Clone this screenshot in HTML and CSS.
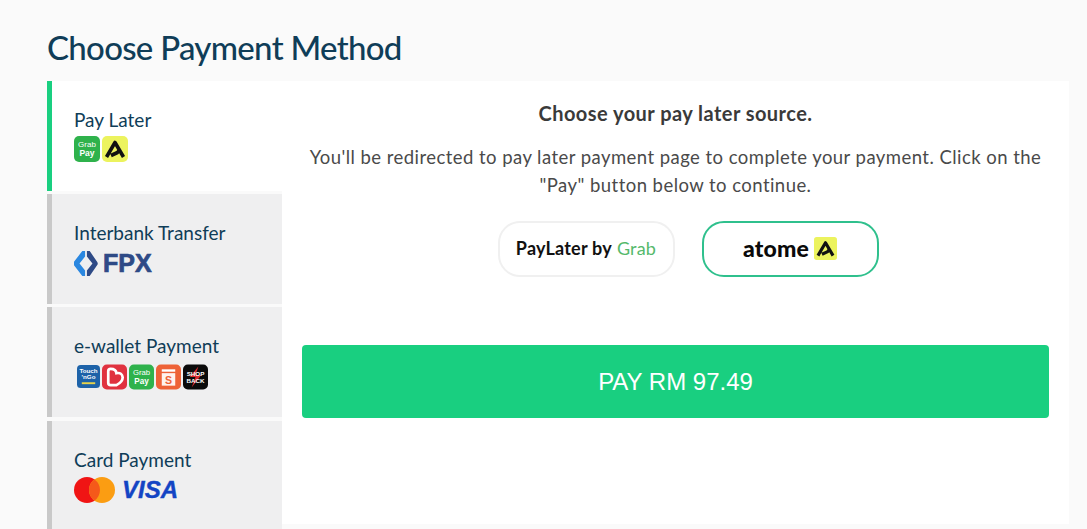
FILE: index.html
```html
<!DOCTYPE html>
<html lang="en">
  <head>
    <meta charset="UTF-8" />
    <meta name="viewport" content="width=device-width, initial-scale=1.0" />
    <title>Choose Payment Method</title>
    <link rel="stylesheet" href="styles.css">
  </head>
  <body>
    <h1 class="page-title">Choose Payment Method</h1>
    <section class="payment">
      <nav class="methods">
        <a class="method method--active">
          <span class="method__label">Pay Later</span>
          <span class="method__icons method__icons--small">
            <svg class="badge" viewBox="0 0 26 26"><rect width="26" height="26" rx="5" fill="#2fb24c"/><text x="13" y="11" text-anchor="middle" class="badge__text badge__text--thin" font-size="8">Grab</text><text x="13" y="20" text-anchor="middle" class="badge__text" font-size="8.5">Pay</text></svg>
            <svg class="badge" viewBox="0 0 26 26"><rect width="26" height="26" rx="5" fill="#ecf35e"/><path class="atome-mark" d="M4.5 21 L13 6.5 L21.5 21 M9 19.5 L15.5 16.5 L18 13"/></svg>
          </span>
        </a>
        <a class="method">
          <span class="method__label">Interbank Transfer</span>
          <span class="method__icons method__icons--fpx">
            <svg class="fpx-mark" viewBox="0 0 26 27"><path d="M12 0 L12 6 L6 13.5 L12 21 L12 27 L9 27 L0 15.5 Q-1 13.5 0 11.5 L9 0 Z" fill="#2a87e0"/><path d="M14 0 L17 0 L25 11.5 Q26.5 13.5 25 15.5 L17 27 L14 27 L14 21 L20 13.5 L14 6 Z" fill="#2e4a86"/></svg>
            <span class="fpx-text">FPX</span>
          </span>
        </a>
        <a class="method">
          <span class="method__label">e-wallet Payment</span>
          <span class="method__icons method__icons--wallets">
            <svg class="badge badge--tng" viewBox="0 0 24 24"><rect width="24" height="24" rx="4" fill="#1d62a8"/><text x="12" y="8.5" text-anchor="middle" class="badge__text" font-size="6.5">Touch</text><text x="12" y="14.5" text-anchor="middle" class="badge__text" font-size="6.5">'nGo</text><rect x="5" y="18" width="14" height="2" fill="#e8d34a"/></svg>
            <svg class="badge badge--wallet" viewBox="0 0 26 26"><rect width="26" height="26" rx="5" fill="#e0323f"/><path d="M6.5 7 Q6.5 4.5 9 4.5 Q14.5 4.5 15 9 Q21 8 21.5 13.5 Q21.5 18 15 21.5 L9 21.5 Q6.5 21.5 6.5 19 Z" fill="#e0323f" stroke="#fff" stroke-width="2.8"/></svg>
            <svg class="badge badge--wallet" viewBox="0 0 26 26"><rect width="26" height="26" rx="5" fill="#2fb24c"/><text x="13" y="11" text-anchor="middle" class="badge__text badge__text--thin" font-size="8">Grab</text><text x="13" y="20" text-anchor="middle" class="badge__text" font-size="8.5">Pay</text></svg>
            <svg class="badge badge--wallet" viewBox="0 0 26 26"><rect width="26" height="26" rx="5" fill="#ee6237"/><path d="M6 5 L20 5 L20 7.5 L6 7.5 Z" fill="#fff"/><rect x="6" y="9" width="14" height="13" fill="#fff" opacity=".92"/><text x="13" y="20" text-anchor="middle" class="badge__text badge__text--shopee" font-size="11">S</text></svg>
            <svg class="badge badge--wallet" viewBox="0 0 26 26"><rect width="26" height="26" rx="5" fill="#0b0b0b"/><path d="M16 2 L7 13 L13 13 L9 24 L19 11 L13 11 Z" fill="#d92b2b"/><text x="13" y="12" text-anchor="middle" class="badge__text" font-size="6.5">SHOP</text><text x="13" y="19" text-anchor="middle" class="badge__text" font-size="6.5">BACK</text></svg>
          </span>
        </a>
        <a class="method">
          <span class="method__label">Card Payment</span>
          <span class="method__icons method__icons--cards">
            <svg class="mastercard" viewBox="0 0 41 26"><circle cx="13" cy="13" r="13" fill="#f01414"/><circle cx="28" cy="13" r="13" fill="#fb9d12"/><path d="M20.5 2.4 a13 13 0 0 1 0 21.2 a13 13 0 0 1 0 -21.2 Z" fill="#f5591a"/></svg>
            <span class="visa-text">VISA</span>
          </span>
        </a>
      </nav>

      <div class="panel">
        <h2 class="panel__title">Choose your pay later source.</h2>
        <p class="panel__text">You'll be redirected to pay later payment page to complete your payment. Click on the "Pay" button below to continue.</p>
        <div class="sources">
          <button class="source">PayLater by <span class="source__grab">Grab</span></button>
          <button class="source source--active">
            <span class="source__atome">atome</span>
            <svg class="source__mark" viewBox="0 0 26 26"><rect width="26" height="26" rx="3" fill="#ecf35e"/><path class="atome-mark" d="M4.5 21 L13 6.5 L21.5 21 M9 19.5 L15.5 16.5 L18 13"/></svg>
          </button>
        </div>
        <button class="pay-button">PAY RM 97.49</button>
      </div>
    </section>
  </body>
</html>
```

FILE: styles.css
```css
:root {
  --navy: #0f3d58;
  --green: #19cf80;
  --grey-tab: #efeff0;
  --grey-edge: #c9c9c9;
}
*,
*::before,
*::after {
  box-sizing: border-box;
}
html,
body {
  height: 100%;
}
body {
  margin: 0;
  padding: 0 18px 0 47px;
  overflow: hidden;
  background: #fafafa;
  font-family: "Lato", "Liberation Sans", sans-serif;
  color: #444;
}
.page-title {
  margin: 0;
  padding-top: 27px;
  height: 81px;
  font-size: 33px;
  line-height: 40px;
  font-weight: 500;
  letter-spacing: -0.7px;
  color: var(--navy);
  white-space: nowrap;
}

.payment {
  display: flex;
  align-items: flex-start;
}

/* Left column */
.methods {
  display: flex;
  flex-direction: column;
  gap: 3.2px;
  width: 235px;
  flex: none;
}
.method {
  display: flex;
  flex-direction: column;
  height: 110px;
  padding: 27px 0 0 22px;
  background: var(--grey-tab);
  border-left: 5px solid var(--grey-edge);
}
.method--active {
  background: #fff;
  border-left-color: var(--green);
}
.method__label {
  font-size: 19px;
  line-height: 24px;
  color: var(--navy);
  white-space: nowrap;
}
.method__icons {
  display: flex;
  align-items: center;
  margin-top: 4px;
  height: 27px;
}
.method__icons--small {
  gap: 2px;
  margin-top: 3px;
}
.method__icons--fpx {
  margin-top: 5px;
}
.method__icons--wallets {
  gap: 2px;
  margin: 5px 0 0 3px;
}
.method__icons--cards {
  gap: 7px;
  margin-top: 5px;
}
.badge {
  display: block;
  width: 26px;
  height: 26px;
}
.badge--wallet {
  width: 25px;
  height: 26px;
}
.badge--tng {
  width: 23px;
  height: 23px;
}
.badge__text {
  font-family: "Liberation Sans", sans-serif;
  font-weight: 700;
  fill: #fff;
}
.badge__text--thin {
  font-weight: 400;
}
.badge__text--shopee {
  fill: #ee6237;
}
.atome-mark {
  fill: none;
  stroke: #111;
  stroke-width: 3.6;
  stroke-linejoin: round;
}
.fpx-mark {
  width: 24px;
  height: 27px;
}
.fpx-text {
  margin-left: 5px;
  font-family: "Liberation Sans", sans-serif;
  font-size: 25px;
  font-weight: 700;
  color: #2e4a86;
  line-height: 29px;
  -webkit-text-stroke: 0.7px #2e4a86;
}
.mastercard {
  width: 41px;
  height: 26px;
}
.visa-text {
  font-family: "Liberation Sans", sans-serif;
  font-size: 24px;
  font-weight: 700;
  font-style: italic;
  color: #1344c4;
  line-height: 28px;
  -webkit-text-stroke: 0.4px #1344c4;
}

/* Right panel */
.panel {
  flex: 1;
  height: 443px;
  padding: 19px 20px 20px;
  background: #fff;
  text-align: center;
}
.panel__title {
  margin: 0;
  font-size: 20px;
  line-height: 26px;
  font-weight: 700;
  letter-spacing: 0.45px;
  color: #3a3a3a;
}
.panel__text {
  margin: 17px auto 0;
  max-width: 745px;
  font-size: 18.5px;
  line-height: 28px;
  letter-spacing: 0.45px;
  color: #4a4a4a;
}
.sources {
  display: flex;
  justify-content: center;
  gap: 27px;
  margin-top: 22px;
  padding-left: 25px;
}
.source {
  display: flex;
  align-items: center;
  justify-content: center;
  gap: 5px;
  width: 177px;
  height: 56px;
  padding: 0 0 2px;
  background: #fff;
  border: 2px solid #f0f0f0;
  border-radius: 22px;
  font-family: inherit;
  font-size: 18px;
  font-weight: 700;
  letter-spacing: 0.2px;
  color: #111;
}
.source--active {
  border-color: #2fc08d;
}
.source__grab {
  font-weight: 400;
  color: #55b96b;
}
.source__atome {
  font-size: 23px;
  font-weight: 900;
  color: #0a0a0a;
}
.source__mark {
  width: 23px;
  height: 23px;
}
.pay-button {
  display: block;
  width: 100%;
  height: 73px;
  margin-top: 68px;
  background: var(--green);
  border: 0;
  border-radius: 4px;
  font-family: "Liberation Sans", sans-serif;
  font-size: 24px;
  color: #fff;
}
```
